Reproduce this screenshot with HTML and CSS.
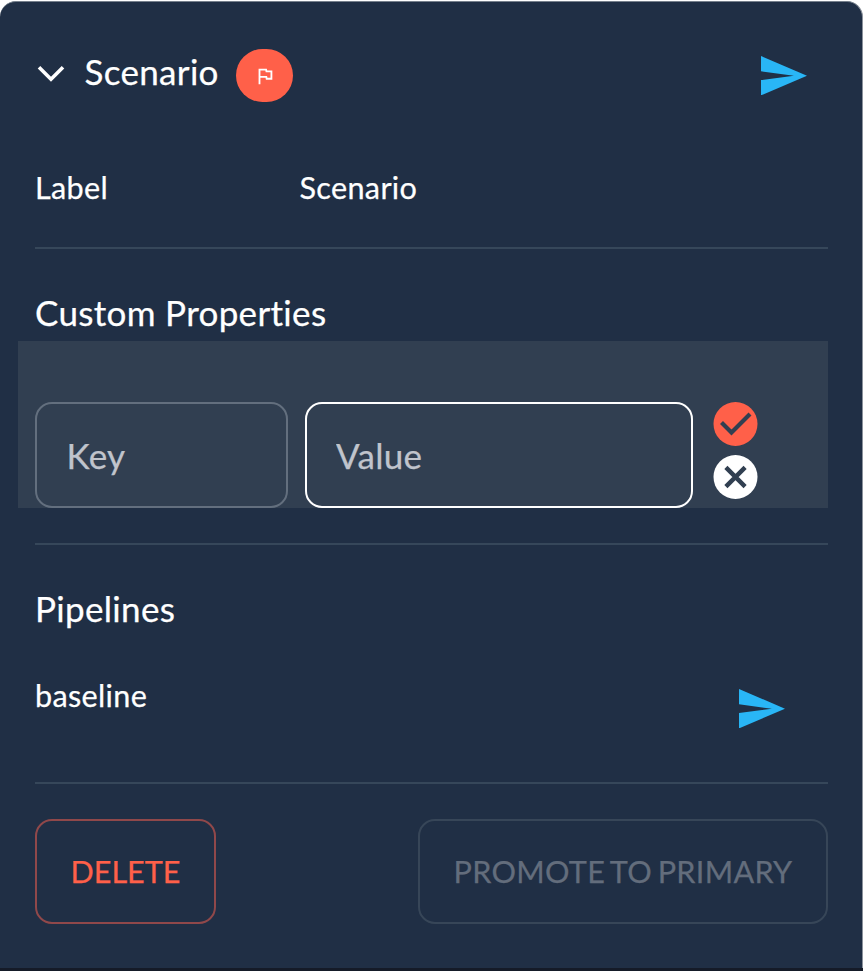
FILE: index.html
```
<!DOCTYPE html>
<html lang="en">
<head>
<meta charset="utf-8">
<title>Scenario</title>
<link rel="stylesheet" href="styles.css">
</head>
<body>
<main class="card">
  <header class="header">
    <svg class="chevron" viewBox="0 0 28 18"><path d="M2 2.2 14 14.2 26 2.2" fill="none" stroke="#fff" stroke-width="3.6"/></svg>
    <h1 class="title">Scenario</h1>
    <span class="badge"><svg viewBox="0 0 24 24"><path d="m12.36 6 .4 2H18v6h-3.36l-.4-2H7V6h5.360M14 4H5v17h2v-7h5.600l.4 2h7V6h-5.600L14 4z" fill="#fff"/></svg></span>
    <svg class="send" viewBox="2 3 21 18" preserveAspectRatio="none"><path d="M2.010 21 23 12 2.010 3 2 10l15 2-15 2z" fill="#29b6f6"/></svg>
  </header>
  <section class="label-row"><span class="label">Label</span><span>Scenario</span></section>
  <hr class="divider">
  <h2 class="subtitle">Custom Properties</h2>
  <form class="editor">
    <input class="field key" placeholder="Key" aria-label="Key">
    <input class="field value" placeholder="Value" aria-label="Value">
    <div class="actions">
      <svg class="apply" viewBox="0 0 44 44"><circle cx="22" cy="22" r="22" fill="#ff6049"/><path d="M8 20.500 18 30.500 36.500 12" fill="none" stroke="#313f51" stroke-width="4.200"/></svg>
      <svg class="cancel" viewBox="0 0 44 44"><circle cx="22" cy="22" r="22" fill="#fff"/><path d="M12.400 12.400 31.600 31.600M31.600 12.400 12.400 31.600" fill="none" stroke="#313f51" stroke-width="4.400"/></svg>
    </div>
  </form>
  <hr class="divider after-editor">
  <h2 class="subtitle pipelines">Pipelines</h2>
  <section class="pipeline-row">
    <span>baseline</span>
    <svg class="send" viewBox="2 3 21 18" preserveAspectRatio="none"><path d="M2.010 21 23 12 2.010 3 2 10l15 2-15 2z" fill="#29b6f6"/></svg>
  </section>
  <hr class="divider">
  <footer class="footer">
    <button class="button delete">DELETE</button>
    <button class="button promote" disabled>PROMOTE TO PRIMARY</button>
  </footer>
</main>
</body>
</html>
```
FILE: styles.css
```
* { box-sizing: border-box; }
html { background: #fff; }
body {
  margin: 0;
  width: 863px;
  height: 971px;
  overflow: hidden;
  background: linear-gradient(#fff 0 500px, #151b28 500px);
  font-family: Lato, sans-serif;
  font-size: 30.600px;
  letter-spacing: .01071em;
  color: #fff;
  -webkit-text-stroke: .250px;
}
.card {
  height: 967px;
  margin-top: 1px;
  padding: 0 34px 0 35px;
  background: #202f45;
  border-top: 1px solid #76808c;
  border-right: 1px solid #8b929c;
  border-radius: 16px 16px 0 0;
  display: flex;
  flex-direction: column;
}
svg { display: block; flex: none; }
h1, h2 { margin: 0; font-size: 35px; font-weight: 400; letter-spacing: .00938em; line-height: 52px; }
.header { height: 147px; display: flex; align-items: center; padding-right: 20px; }
.chevron { width: 28px; height: 18px; margin-left: 1.5px; margin-top: -3px; }
.title { margin: -9px 0 0 20px; }
.badge {
  width: 57px;
  height: 53px;
  margin-left: 17px;
  border-radius: 26.500px;
  background: #ff6049;
  display: flex;
  align-items: center;
  justify-content: center;
}
.badge svg { width: 22px; height: 22px; margin-left: 1px; }
.send { width: 46px; height: 39.400px; margin: 0 1px 0 auto; }
.label-row { height: 98px; display: flex; padding-top: 16px; line-height: 46px; }
.label { width: 264.500px; }
.divider { width: 100%; height: 2px; margin: 0; border: 0; flex: none; background: #36475a; }
.subtitle { margin-top: 37px; height: 55px; }
.editor {
  height: 167px;
  margin: 0 0 0 -17px;
  padding: 61px 70px 0 17px;
  background: #313f51;
  display: flex;
  flex: none;
}
.field {
  height: 106px;
  padding: 0 29px 1px;
  border: 2px solid #636f7e;
  border-radius: 17px;
  background: transparent;
  color: #fff;
  font: 400 35px Lato, sans-serif;
  letter-spacing: .00938em;
  outline: none;
}
.field::placeholder { color: #c0c4cc; opacity: 1; }
.key { width: 253px; padding-left: 29.500px; }
.value { width: 388px; margin-left: 17px; border-color: #fff; }
.actions { display: flex; flex-direction: column; gap: 8.500px; margin-left: 20px; }
.actions svg { width: 45px; height: 44px; }
.after-editor { margin-top: 35px; }
.pipelines { height: 54px; }
.pipeline-row { height: 146px; display: flex; padding: 37px 42px 0 0; line-height: 46px; }
.pipeline-row .send { margin-top: 16px; }
.footer { display: flex; justify-content: space-between; padding-top: 35px; }
.button {
  height: 105px;
  border: 2px solid;
  border-radius: 17px;
  padding: 0;
  background: transparent;
  font: 400 30.600px Lato, sans-serif;
  letter-spacing: .01px;
}
.delete { width: 181px; color: #ff6049; border-color: #90484a; }
.promote { width: 410px; color: #636d7c; border-color: #374658; word-spacing: -2.500px; letter-spacing: .300px; }
```
